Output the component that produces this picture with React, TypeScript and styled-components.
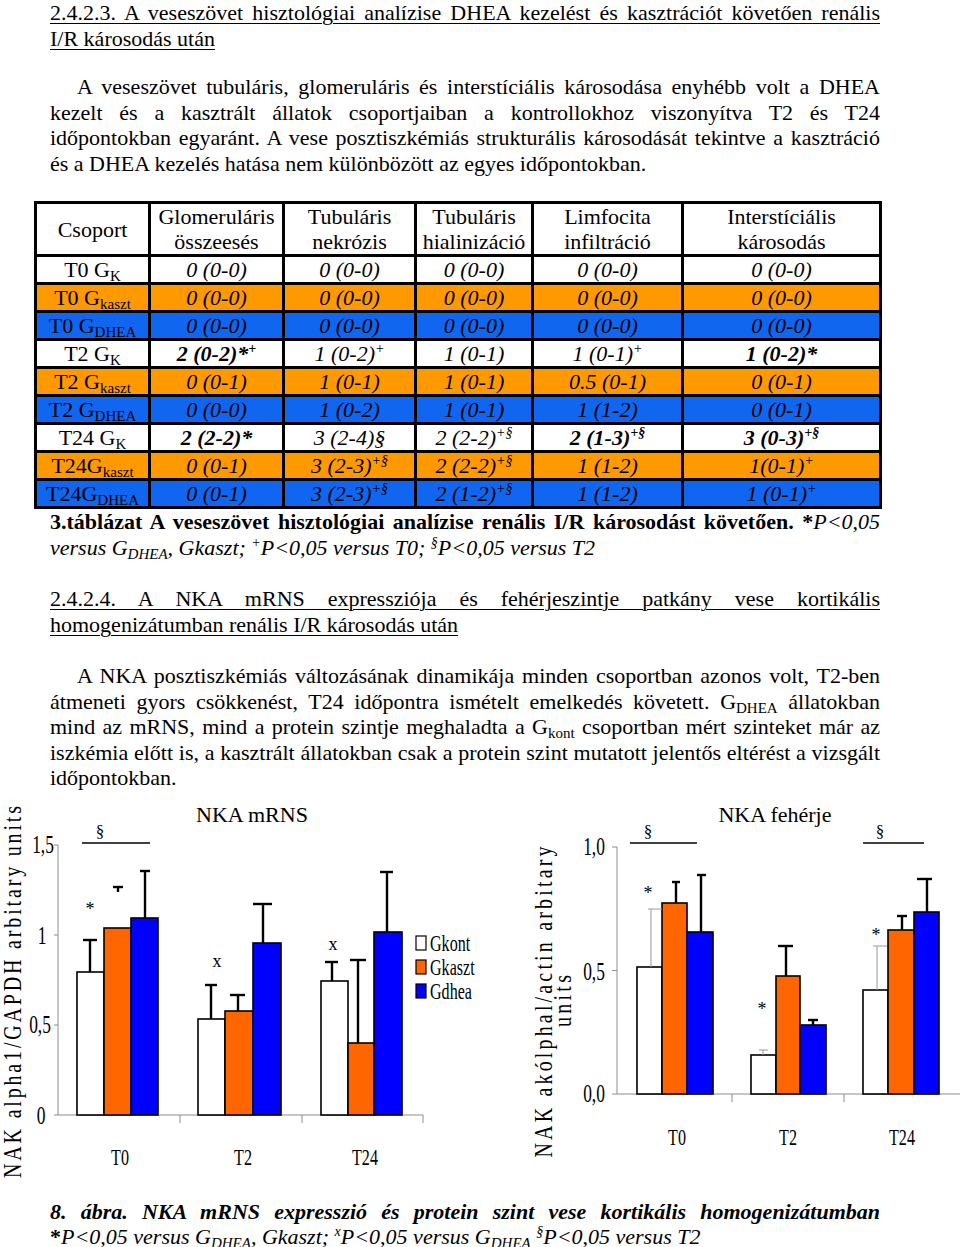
import React from "react";
import styled, { createGlobalStyle } from "styled-components";

const GlobalStyle = createGlobalStyle`
  html, body {
    margin: 0;
    padding: 0;
    background: #fff;
  }
  body {
    font-family: "Liberation Serif", "Times New Roman", serif;
    font-size: 22px;
    line-height: 25.5px;
    color: #000;
    overflow: hidden;
  }
`;

const TABLE_TONES = { w: "#ffffff", o: "#ff9900", b: "#1166f0" } as const;
const BAR = { w: "#ffffff", o: "#ff6600", b: "#0000ff" } as const;

type Tone = keyof typeof TABLE_TONES;

const Page = styled.div`
  width: 960px;
  height: 1247px;
  overflow: hidden;
`;

const Column = styled.div`
  width: 830px;
  margin-left: 50px;
`;

const Heading = styled.div<{ $top: number }>`
  margin-top: ${(p) => p.$top}px;
  text-decoration: underline;
  text-decoration-thickness: 1px;
  text-underline-offset: 3px;
`;

const Paragraph = styled.div<{ $top: number }>`
  margin-top: ${(p) => p.$top}px;
`;

const Line = styled.div<{ $just?: boolean; $indent?: boolean }>`
  white-space: nowrap;
  text-align: ${(p) => (p.$just ? "justify" : "left")};
  text-align-last: ${(p) => (p.$just ? "justify" : "left")};
  word-spacing: ${(p) => (p.$just ? "-3px" : "0")};
  text-indent: ${(p) => (p.$indent ? "27px" : "0")};
`;

const Strong = styled.span`
  font-weight: bold;
`;

const Em = styled.span`
  font-style: italic;
`;

const StrongEm = styled.span`
  font-weight: bold;
  font-style: italic;
`;

const Sub = styled.span`
  font-size: 15px;
  vertical-align: -4px;
  line-height: 0;
`;

const Sup = styled.span`
  font-size: 14px;
  vertical-align: 8px;
  line-height: 0;
`;

/* ---------- table ---------- */

const Table = styled.table`
  margin: 25px 0 0 -16px;
  width: 845px;
  border-collapse: collapse;
  table-layout: fixed;
  border: 3px solid #000;
  line-height: 25px;
`;

const HeadCell = styled.th`
  border: 3px solid #000;
  font-weight: normal;
  height: 50px;
  padding: 0;
  text-align: center;
  vertical-align: middle;
  white-space: nowrap;
`;

const Row = styled.tr<{ $tone: Tone }>`
  background: ${(p) => TABLE_TONES[p.$tone]};
`;

const Cell = styled.td<{ $label?: boolean; $bold?: boolean }>`
  border: 3px solid #000;
  height: 25px;
  padding: 0;
  text-align: center;
  white-space: nowrap;
  font-style: ${(p) => (p.$label ? "normal" : "italic")};
  font-weight: ${(p) => (p.$bold ? "bold" : "normal")};
`;

type Val = { t: string; sup?: string; b?: boolean };

const zero = (t: string): Val[] => Array.from({ length: 5 }, () => ({ t }));

const rows: { tone: Tone; label: React.ReactNode; vals: Val[] }[] = [
  { tone: "w", label: <>T0 G<Sub>K</Sub></>, vals: zero("0 (0-0)") },
  { tone: "o", label: <>T0 G<Sub>kaszt</Sub></>, vals: zero("0 (0-0)") },
  { tone: "b", label: <>T0 G<Sub>DHEA</Sub></>, vals: zero("0 (0-0)") },
  {
    tone: "w",
    label: <>T2 G<Sub>K</Sub></>,
    vals: [
      { t: "2 (0-2)*", sup: "+", b: true },
      { t: "1 (0-2)", sup: "+" },
      { t: "1 (0-1)" },
      { t: "1 (0-1)", sup: "+" },
      { t: "1 (0-2)*", b: true },
    ],
  },
  {
    tone: "o",
    label: <>T2 G<Sub>kaszt</Sub></>,
    vals: [{ t: "0 (0-1)" }, { t: "1 (0-1)" }, { t: "1 (0-1)" }, { t: "0.5 (0-1)" }, { t: "0 (0-1)" }],
  },
  {
    tone: "b",
    label: <>T2 G<Sub>DHEA</Sub></>,
    vals: [{ t: "0 (0-0)" }, { t: "1 (0-2)" }, { t: "1 (0-1)" }, { t: "1 (1-2)" }, { t: "0 (0-1)" }],
  },
  {
    tone: "w",
    label: <>T24 G<Sub>K</Sub></>,
    vals: [
      { t: "2 (2-2)*", b: true },
      { t: "3 (2-4)§" },
      { t: "2 (2-2)", sup: "+§" },
      { t: "2 (1-3)", sup: "+§", b: true },
      { t: "3 (0-3)", sup: "+§", b: true },
    ],
  },
  {
    tone: "o",
    label: <>T24G<Sub>kaszt</Sub></>,
    vals: [
      { t: "0 (0-1)" },
      { t: "3 (2-3)", sup: "+§" },
      { t: "2 (2-2)", sup: "+§" },
      { t: "1 (1-2)" },
      { t: "1(0-1)", sup: "+" },
    ],
  },
  {
    tone: "b",
    label: <>T24G<Sub>DHEA</Sub></>,
    vals: [
      { t: "0 (0-1)" },
      { t: "3 (2-3)", sup: "+§" },
      { t: "2 (1-2)", sup: "+§" },
      { t: "1 (1-2)" },
      { t: "1 (0-1)", sup: "+" },
    ],
  },
];

const colWidths = [114, 134, 132, 117, 150, 198];

const heads: React.ReactNode[] = [
  "Csoport",
  <>Glomeruláris<br />összeesés</>,
  <>Tubuláris<br />nekrózis</>,
  <>Tubuláris<br />hialinizáció</>,
  <>Limfocita<br />infiltráció</>,
  <>Interstíciális<br />károsodás</>,
];

const HistologyTable = () => (
  <Table>
    <colgroup>
      {colWidths.map((w, i) => (
        <col key={i} style={{ width: w }} />
      ))}
    </colgroup>
    <thead>
      <tr>
        {heads.map((h, i) => (
          <HeadCell key={i}>{h}</HeadCell>
        ))}
      </tr>
    </thead>
    <tbody>
      {rows.map((r, i) => (
        <Row key={i} $tone={r.tone}>
          <Cell $label>{r.label}</Cell>
          {r.vals.map((v, j) => (
            <Cell key={j} $bold={v.b}>
              {v.t}
              {v.sup && <Sup>{v.sup}</Sup>}
            </Cell>
          ))}
        </Row>
      ))}
    </tbody>
  </Table>
);

/* ---------- charts ---------- */

const Figure = styled.div`
  display: flex;
  width: 960px;
  height: 408px;
`;

const ChartSvg = styled.svg`
  display: block;
  width: 480px;
  height: 408px;
  font-family: "Liberation Serif", "Times New Roman", serif;
`;

// narrow chart lettering, as in the exported spreadsheet graph
const NARROW = 0.67;

type Err = { sx: number; to: number; c: [number, number]; from?: number; thin?: boolean };
type BarSpec = { x1: number; x2: number; top: number; fill: string; err: Err };
type Label = { text: string; x: number; y: number };

type ChartSpec = {
  title: string;
  titleX: number;
  axisX: number;
  axisTop: number;
  zeroY: number;
  axisEnd: number;
  tickX: number;
  yTicks: { y: number; label: Label }[];
  groupTicks: number[];
  xLabels: Label[];
  bars: BarSpec[];
  marks: { text: string; x: number; y: number }[];
  brackets: { x1: number; x2: number; mx: number }[];
  yTitle: { text: string; x: number; y: number; len: number }[];
  legend?: boolean;
};

const mrns: ChartSpec = {
  title: "NKA mRNS",
  titleX: 252,
  axisX: 58,
  axisTop: 54,
  zeroY: 324,
  axisEnd: 423,
  tickX: 54,
  yTicks: [
    { y: 54, label: { text: "1,5", x: 43, y: 62 } },
    { y: 144, label: { text: "1", x: 42, y: 153 } },
    { y: 234, label: { text: "0,5", x: 40, y: 242 } },
    { y: 324, label: { text: "0", x: 41, y: 333 } },
  ],
  groupTicks: [180, 302, 423],
  xLabels: [
    { text: "T0", x: 120, y: 374 },
    { text: "T2", x: 243, y: 374 },
    { text: "T24", x: 365, y: 374 },
  ],
  bars: [
    { x1: 77, x2: 104, top: 181, fill: BAR.w, err: { sx: 90, to: 149, c: [83, 97] } },
    { x1: 104, x2: 131, top: 137, fill: BAR.o, err: { sx: 118, from: 101, to: 96, c: [113, 123] } },
    { x1: 131, x2: 158, top: 127, fill: BAR.b, err: { sx: 145, to: 80, c: [140, 150] } },
    { x1: 198, x2: 225, top: 228, fill: BAR.w, err: { sx: 211, to: 194, c: [205, 217] } },
    { x1: 225, x2: 253, top: 220, fill: BAR.o, err: { sx: 238, to: 204, c: [230, 245] } },
    { x1: 253, x2: 281, top: 152, fill: BAR.b, err: { sx: 263, to: 113, c: [253, 272] } },
    { x1: 321, x2: 348, top: 190, fill: BAR.w, err: { sx: 332, to: 171, c: [325, 338] } },
    { x1: 348, x2: 374, top: 252, fill: BAR.o, err: { sx: 358, to: 169, c: [350, 366] } },
    { x1: 374, x2: 402, top: 141, fill: BAR.b, err: { sx: 387, to: 81, c: [380, 393] } },
  ],
  marks: [
    { text: "*", x: 90, y: 124 },
    { text: "x", x: 217, y: 176 },
    { text: "x", x: 333, y: 159 },
  ],
  brackets: [{ x1: 82, x2: 150, mx: 100 }],
  yTitle: [{ text: "NAK alpha1/GAPDH arbitary units", x: 21, y: 201, len: 372 }],
  legend: true,
};

const feherje: ChartSpec = {
  title: "NKA fehérje",
  titleX: 295,
  axisX: 137,
  axisTop: 56,
  zeroY: 303,
  axisEnd: 480,
  tickX: 132,
  yTicks: [
    { y: 56, label: { text: "1,0", x: 114, y: 64 } },
    { y: 179.5, label: { text: "0,5", x: 114, y: 189 } },
    { y: 303, label: { text: "0,0", x: 114, y: 311 } },
  ],
  groupTicks: [252, 364],
  xLabels: [
    { text: "T0", x: 197, y: 354 },
    { text: "T2", x: 308, y: 354 },
    { text: "T24", x: 422, y: 354 },
  ],
  bars: [
    { x1: 157, x2: 182, top: 176, fill: BAR.w, err: { sx: 171, to: 118, c: [168, 182], thin: true } },
    { x1: 182, x2: 207, top: 112, fill: BAR.o, err: { sx: 196, to: 91, c: [192, 200] } },
    { x1: 207, x2: 233, top: 141, fill: BAR.b, err: { sx: 221, to: 84, c: [217, 226] } },
    { x1: 271, x2: 296, top: 264, fill: BAR.w, err: { sx: 283, to: 259, c: [279, 288], thin: true } },
    { x1: 296, x2: 320, top: 185, fill: BAR.o, err: { sx: 306, to: 155, c: [298, 313] } },
    { x1: 320, x2: 346, top: 234, fill: BAR.b, err: { sx: 333, to: 229, c: [328, 338] } },
    { x1: 383, x2: 408, top: 199, fill: BAR.w, err: { sx: 397, to: 155, c: [393, 407], thin: true } },
    { x1: 408, x2: 434, top: 139, fill: BAR.o, err: { sx: 422, to: 125, c: [417, 427] } },
    { x1: 434, x2: 459, top: 121, fill: BAR.b, err: { sx: 447, to: 88, c: [437, 452] } },
  ],
  marks: [
    { text: "*", x: 168, y: 108 },
    { text: "*", x: 282, y: 224 },
    { text: "*", x: 396, y: 150 },
  ],
  brackets: [
    { x1: 150, x2: 217, mx: 168 },
    { x1: 383, x2: 444, mx: 400 },
  ],
  yTitle: [
    { text: "NAK akólphal/actin arbitary", x: 72, y: 211, len: 311 },
    { text: "units", x: 91, y: 210, len: 52 },
  ],
};

const legendItems = [
  { name: "Gkont", fill: BAR.w, y: 152 },
  { name: "Gkaszt", fill: BAR.o, y: 176 },
  { name: "Gdhea", fill: BAR.b, y: 200 },
];

const AXIS = "#8c8c8c";

const narrow = (x: number, y: number) => `translate(${x} ${y}) scale(${NARROW} 1)`;

const Chart = ({ spec }: { spec: ChartSpec }) => (
  <ChartSvg viewBox="0 0 480 408">
    <text x={spec.titleX} y={31} fontSize={22} textAnchor="middle">
      {spec.title}
    </text>

    {spec.brackets.map((b) => (
      <g key={b.x1}>
        <text x={b.mx} y={46} fontSize={17} textAnchor="middle">
          §
        </text>
        <line x1={b.x1} x2={b.x2} y1={52} y2={52} stroke="#000" strokeWidth={1.5} />
      </g>
    ))}

    {spec.yTitle.map((t) => (
      <text
        key={t.text}
        transform={`translate(${t.x} ${t.y}) rotate(-90) scale(0.8 1)`}
        fontSize={25}
        textAnchor="middle"
        textLength={t.len / 0.8}
        lengthAdjust="spacing"
      >
        {t.text}
      </text>
    ))}

    <line x1={spec.axisX} x2={spec.axisX} y1={spec.axisTop} y2={spec.zeroY} stroke={AXIS} strokeWidth={1} />
    <line x1={spec.axisX} x2={spec.axisEnd} y1={spec.zeroY} y2={spec.zeroY} stroke={AXIS} strokeWidth={1} />
    {spec.yTicks.map((t) => (
      <g key={t.y}>
        <line x1={spec.tickX} x2={spec.axisX} y1={t.y} y2={t.y} stroke={AXIS} strokeWidth={1} />
        <text transform={narrow(t.label.x, t.label.y)} fontSize={26} textAnchor="middle">
          {t.label.text}
        </text>
      </g>
    ))}
    {spec.groupTicks.map((x) => (
      <line key={x} x1={x} x2={x} y1={spec.zeroY} y2={spec.zeroY + 8} stroke={AXIS} strokeWidth={1} />
    ))}
    {spec.xLabels.map((l) => (
      <text key={l.text} transform={narrow(l.x, l.y)} fontSize={24} textAnchor="middle">
        {l.text}
      </text>
    ))}

    {spec.bars.map((b) => (
      <rect
        key={b.x1}
        x={b.x1}
        y={b.top}
        width={b.x2 - b.x1}
        height={spec.zeroY - b.top}
        fill={b.fill}
        stroke="#000"
        strokeWidth={1.6}
      />
    ))}
    {spec.bars.map((b) => {
      const e = b.err;
      const col = e.thin ? "#9a9a9a" : "#000";
      const sw = e.thin ? 1 : 2.4;
      return (
        <g key={`e${b.x1}`}>
          <line x1={e.sx} x2={e.sx} y1={e.from ?? b.top} y2={e.to} stroke={col} strokeWidth={sw} />
          <line x1={e.c[0]} x2={e.c[1]} y1={e.to} y2={e.to} stroke={col} strokeWidth={sw} />
        </g>
      );
    })}

    {spec.marks.map((m, i) => (
      <text key={i} x={m.x} y={m.y} fontSize={18} textAnchor="middle">
        {m.text}
      </text>
    ))}

    {spec.legend &&
      legendItems.map((it) => (
        <g key={it.name}>
          <rect x={416} y={it.y - 7} width={10} height={14} fill={it.fill} stroke="#000" strokeWidth={1.2} />
          <text transform={narrow(430, it.y + 8)} fontSize={24}>
            {it.name}
          </text>
        </g>
      ))}
  </ChartSvg>
);

/* ---------- page ---------- */

export default function App() {
  return (
    <>
      <GlobalStyle />
      <Page>
        <Column>
          <Heading $top={0}>
            <Line $just>
              2.4.2.3. A veseszövet hisztológiai analízise DHEA kezelést és kasztrációt követően renális
            </Line>
            <Line>I/R károsodás után</Line>
          </Heading>

          <Paragraph $top={23}>
            <Line $just $indent>
              A veseszövet tubuláris, glomeruláris és interstíciális károsodása enyhébb volt a DHEA
            </Line>
            <Line $just>kezelt és a kasztrált állatok csoportjaiban a kontrollokhoz viszonyítva T2 és T24</Line>
            <Line $just>
              időpontokban egyaránt. A vese posztiszkémiás strukturális károsodását tekintve a kasztráció
            </Line>
            <Line>és a DHEA kezelés hatása nem különbözött az egyes időpontokban.</Line>
          </Paragraph>

          <HistologyTable />

          <Paragraph $top={0}>
            <Line $just>
              <Strong>3.táblázat A veseszövet hisztológiai analízise renális I/R károsodást követően. *</Strong>
              <Em>P&lt;0,05</Em>
            </Line>
            <Line>
              <Em>
                versus G<Sub>DHEA</Sub>, Gkaszt; <Sup>+</Sup>P&lt;0,05 versus T0; <Sup>§</Sup>P&lt;0,05 versus T2
              </Em>
            </Line>
          </Paragraph>

          <Heading $top={26}>
            <Line $just>
              2.4.2.4. A NKA mRNS expressziója és fehérjeszintje patkány vese kortikális
            </Line>
            <Line>homogenizátumban renális I/R károsodás után</Line>
          </Heading>

          <Paragraph $top={26}>
            <Line $just $indent>
              A NKA posztiszkémiás változásának dinamikája minden csoportban azonos volt, T2-ben
            </Line>
            <Line $just>
              átmeneti gyors csökkenést, T24 időpontra ismételt emelkedés követett. G<Sub>DHEA</Sub> állatokban
            </Line>
            <Line $just>
              mind az mRNS, mind a protein szintje meghaladta a G<Sub>kont</Sub> csoportban mért szinteket már az
            </Line>
            <Line $just>
              iszkémia előtt is, a kasztrált állatokban csak a protein szint mutatott jelentős eltérést a vizsgált
            </Line>
            <Line>időpontokban.</Line>
          </Paragraph>
        </Column>

        <Figure>
          <Chart spec={mrns} />
          <Chart spec={feherje} />
        </Figure>

        <Column>
          <Paragraph $top={0}>
            <Line $just>
              <StrongEm>8. ábra. NKA mRNS expresszió és protein szint vese kortikális homogenizátumban</StrongEm>
            </Line>
            <Line>
              <Strong>*</Strong>
              <Em>
                P&lt;0,05 versus G<Sub>DHEA</Sub>, Gkaszt; <Sup>x</Sup>P&lt;0,05 versus G<Sub>DHEA</Sub>{" "}
                <Sup>§</Sup>P&lt;0,05 versus T2
              </Em>
            </Line>
          </Paragraph>
        </Column>
      </Page>
    </>
  );
}
